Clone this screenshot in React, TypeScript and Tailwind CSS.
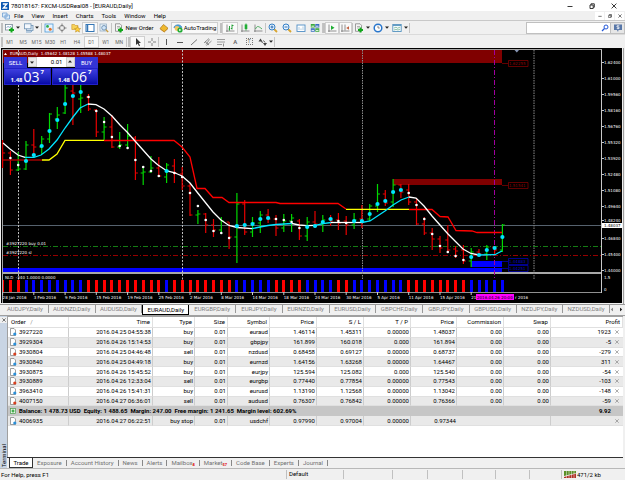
import { useState, type ReactNode } from "react";
import clsx from "clsx";

/* ---------- toolbar icons, drawn on a 10x10 grid ---------- */

function Ic({ children, className = "w-[10px] h-[10px]" }: { children: ReactNode; className?: string }) {
  return (
    <svg viewBox="0 0 10 10" className={clsx("shrink-0", className)} fill="none" aria-hidden="true">
      {children}
    </svg>
  );
}

const plus = <path d="M6.5 4.5v5M4 7h5" stroke="#12a81c" strokeWidth="2" />;
const axes = <path d="M2 1.5v7.5M1 8h8.5" stroke="#777" strokeWidth="0.8" />;

const icons = {
  newChart: (
    <Ic>
      <rect x="0.5" y="1.5" width="7" height="5.5" fill="#fff" stroke="#7a8b99" strokeWidth="0.8" />
      <path d="M1.5 4.5l1.5-1 1.5.8 2-1.5" stroke="#5a87b5" strokeWidth="0.7" />
      {plus}
    </Ic>
  ),
  profiles: (
    <Ic>
      <rect x="2.5" y="2.5" width="6.5" height="5" fill="#dce9f5" stroke="#6f93b5" strokeWidth="0.8" />
      <rect x="0.5" y="0.8" width="6.5" height="5" fill="#f3f8fd" stroke="#6f93b5" strokeWidth="0.8" />
      <path d="M2 9h5l1-.8" stroke="#7fa5cc" />
    </Ic>
  ),
  watch: (
    <Ic>
      <rect x="1" y="1" width="8" height="8" fill="#e8f3ff" stroke="#4f9bd8" strokeWidth="0.8" />
      <circle cx="3.5" cy="3.4" r="1.4" fill="#2fae4e" />
      <circle cx="6.2" cy="6.2" r="1.5" fill="#e0752a" />
    </Ic>
  ),
  target: (
    <Ic>
      <circle cx="5" cy="5" r="2.6" stroke="#777" strokeWidth="0.8" />
      <path d="M5 .5v3M5 6.5v3M.5 5h3M6.5 5h3" stroke="#666" strokeWidth="0.8" />
    </Ic>
  ),
  navigator: (
    <Ic>
      <path d="M.8 1.5h2.7l.8 1H7v4H.8z" fill="#f7d35a" stroke="#c9962a" strokeWidth="0.6" />
      <path d="M6.5 3.5l1 1.9 2.1.2L8 7l.5 2.1-2-1.1-2 1.1L5 7 3.5 5.6l2.1-.2z" fill="#ffcf3d" stroke="#b98717" strokeWidth="0.5" />
    </Ic>
  ),
  terminal: (
    <Ic>
      <rect x="1" y="1.5" width="8" height="7" fill="#fff" stroke="#3576b5" strokeWidth="1" />
      <path d="M2.5 2v6" stroke="#3576b5" strokeWidth="1.5" />
    </Ic>
  ),
  tester: (
    <Ic>
      <rect x="1" y="1" width="6.5" height="7" fill="#e9f1f8" stroke="#8aa5bf" strokeWidth="0.7" />
      <circle cx="5" cy="4.8" r="2.3" fill="#cfe5f8" stroke="#5f84a8" strokeWidth="0.8" />
      <path d="M6.8 6.6l2.4 2.4" stroke="#c79a3c" strokeWidth="1.3" />
    </Ic>
  ),
  order: (
    <Ic>
      <path d="M1.5.8H6l1.5 1.5v6h-6z" fill="#f5f5f5" stroke="#777" strokeWidth="0.7" />
      <path d="M3 3.5h3M3 5h2" stroke="#888" strokeWidth="0.6" />
      {plus}
    </Ic>
  ),
  editor: (
    <Ic>
      <path d="M1 5.5L4.5 1.5 9 5.2 5.2 8.8z" fill="#efb92d" stroke="#a8741a" strokeWidth="0.7" />
      <path d="M1.2 6l4 3 3.7-3.3" stroke="#c98b22" strokeWidth="0.8" />
    </Ic>
  ),
  auto: (
    <Ic>
      <path d="M.8 4.5C2 .8 8 .8 9 4.5z" fill="#4ba3dc" stroke="#2b75ad" strokeWidth="0.5" />
      <circle cx="4" cy="5.5" r="2.4" fill="#f3c761" />
      <circle cx="7" cy="7" r="2.6" fill="#22ab35" />
      <path d="M6.2 5.7L8.4 7 6.2 8.3z" fill="#fff" />
    </Ic>
  ),
  bars: (
    <Ic>
      {axes}
      <path d="M4.5 3v4.5M3.5 6h1M7 1.5v5M7 2.5h1.5M5.8 5.5H7" stroke="#149a2a" strokeWidth="0.9" />
    </Ic>
  ),
  candles: (
    <Ic>
      {axes}
      <path d="M6 .5v7" stroke="#149a2a" strokeWidth="0.8" />
      <rect x="4.7" y="1.5" width="2.6" height="4.5" fill="#1fae35" />
    </Ic>
  ),
  line: (
    <Ic>
      {axes}
      <path d="M2.5 6C4 2.5 5.5 3 9 6" stroke="#3fa653" strokeWidth="0.9" />
    </Ic>
  ),
  zoomIn: (
    <Ic>
      <path d="M6 6l3 3" stroke="#d8a531" strokeWidth="1.8" />
      <circle cx="4" cy="4" r="3" fill="#e5f2ff" stroke="#357fc5" strokeWidth="1" />
      <path d="M2.5 4h3M4 2.5v3" stroke="#1e63ad" strokeWidth="0.9" />
    </Ic>
  ),
  zoomOut: (
    <Ic>
      <path d="M6 6l3 3" stroke="#d8a531" strokeWidth="1.8" />
      <circle cx="4" cy="4" r="3" fill="#e5f2ff" stroke="#357fc5" strokeWidth="1" />
      <path d="M2.5 4h3" stroke="#1e63ad" strokeWidth="0.9" />
    </Ic>
  ),
  grid: (
    <Ic>
      <rect x="1" y="2" width="8" height="6.5" fill="#fff" stroke="#4f8ec5" strokeWidth="0.9" />
      <path d="M3 4v3M5 5.5v1.5M7 3.5v3.5" stroke="#8db4d6" strokeWidth="0.7" />
    </Ic>
  ),
  tiles: (
    <Ic>
      <path d="M.8 1h4v3.5h-4zM5.3 5.2h4v3.5h-4z" fill="#3aa83f" />
      <path d="M5.3 1h4v3.5h-4zM.8 5.2h4v3.5h-4z" fill="#3a6fc0" />
      <path d="M1.5 3.2H4M6 3.2h2.5M1.5 7.4H4M6 7.4h2.5" stroke="#fff" strokeWidth="0.9" />
    </Ic>
  ),
  scroll: (
    <Ic>
      {axes}
      <path d="M4 2.5l3.5 2.3L4 7z" fill="#1fae35" />
    </Ic>
  ),
  shift: (
    <Ic>
      {axes}
      <path d="M5 1.5v6" stroke="#777" strokeWidth="0.8" />
      <path d="M9 3.2L6.2 5 9 6.7z" fill="#c2603f" />
    </Ic>
  ),
  clock: (
    <Ic>
      <circle cx="5" cy="5" r="3.8" fill="#fff" stroke="#2876cc" strokeWidth="1.5" />
      <path d="M5 2.8V5h1.8" stroke="#555" strokeWidth="0.7" />
    </Ic>
  ),
  template: (
    <Ic>
      <rect x="0.8" y="1.5" width="8.4" height="7" fill="#f4fafd" stroke="#5492be" strokeWidth="0.9" />
      <path d="M1 2.5h8" stroke="#5492be" strokeWidth="0.9" />
      <path d="M2 5l2-.8 1.5 1L8 4.2M2 7l2-.6 2 .6 2-.8" stroke="#56a172" strokeWidth="0.6" />
    </Ic>
  ),
  cursor: (
    <Ic>
      <path d="M3 1v7l1.7-1.5L6 9.2l1-.5-1.2-2.6H8z" fill="#333" />
    </Ic>
  ),
  cross: (
    <Ic>
      <path d="M5 1v3M5 6v3M1 5h3M6 5h3" stroke="#666" strokeWidth="0.8" />
    </Ic>
  ),
  vline: (
    <Ic>
      <path d="M5.5 2v6" stroke="#555" strokeWidth="1" />
    </Ic>
  ),
  hline: (
    <Ic>
      <path d="M2 5.5h6" stroke="#555" strokeWidth="1" />
    </Ic>
  ),
  trend: (
    <Ic>
      <path d="M2 8l6-5.5" stroke="#555" strokeWidth="0.8" />
    </Ic>
  ),
  channel: (
    <Ic>
      <path d="M1 6l5-4.5M3.5 8.5l5-4.5M3 7.5l3.5-5M2 4.5l4 3.5" stroke="#666" strokeWidth="0.7" />
    </Ic>
  ),
  fibo: (
    <Ic>
      <path d="M1 2.5h8M1 5h8M1 7.5h5" stroke="#888" strokeWidth="0.8" />
      <path d="M7.5 6.5v3" stroke="#777" strokeWidth="0.8" />
    </Ic>
  ),
  arrows: (
    <Ic>
      <path d="M2.5 1.5l2 3h-4zM7 9L5 6h4z" fill="#444" />
      <path d="M3 4.5l2 1M5.5 3.5l1.5 2" stroke="#444" strokeWidth="0.9" />
    </Ic>
  ),
};

const Caret = () => (
  <svg viewBox="0 0 4 3" className="w-[4px] h-[3px] shrink-0" aria-hidden="true">
    <path d="M0 .5h4L2 2.7z" fill="#222" />
  </svg>
);

const Sep = () => <span className="w-px h-[10px] bg-[#c4c4c4] shrink-0" />;
const Grip = () => <span className="w-[2px] h-[10px] border-x border-[#c0c0c0] shrink-0" />;

function Tool({
  label,
  children,
  pressed,
  className,
}: {
  label: string;
  children: ReactNode;
  pressed?: boolean;
  className?: string;
}) {
  return (
    <button
      type="button"
      aria-label={label}
      title={label}
      className={clsx(
        "h-[12px] flex items-center justify-center whitespace-nowrap",
        pressed && "bg-[#f9f9f9] border border-[#cfcfcf]",
        className ?? "flex-1 min-w-0",
      )}
    >
      {children}
    </button>
  );
}

/* ---------- chart data ---------- */

const STEP = 7.81;
const barX = (i: number) => Math.round((2.6 + STEP * i) * 10) / 10;

// [colour, high, low, left tick, right tick, dot y, dot kind]
type Bar = ["r" | "g", number, number, number, number, number, "c" | "w" | ""];

const bars: Bar[] = [
  ["r", 140, 168, 0, 153, 0, ""],
  ["r", 151, 175, 153, 170, 158, "w"],
  ["g", 152, 171, 170, 169, 165, "w"],
  ["g", 141, 170, 169, 145, 161, "c"],
  ["r", 129, 157, 145, 147, 155, "c"],
  ["g", 136, 154, 147, 139, 146, "c"],
  ["g", 113, 143, 139, 114, 131, "c"],
  ["g", 107, 129, 119, 115, 120, "c"],
  ["g", 84, 114, 113, 88, 104, "c"],
  ["r", 84, 125, 91, 93, 96, "c"],
  ["g", 85, 113, 99, 98, 92, "c"],
  ["r", 94, 111, 97, 109, 97, "w"],
  ["r", 109, 137, 110, 132, 111, "w"],
  ["g", 117, 141, 132, 127, 122, "w"],
  ["r", 115, 148, 127, 147, 137, "w"],
  ["g", 132, 149, 147, 145, 146, "w"],
  ["g", 124, 148, 145, 136, 148, "w"],
  ["r", 136, 180, 138, 173, 160, "w"],
  ["g", 166, 185, 173, 172, 167, "w"],
  ["g", 156, 173, 172, 168, 171, "w"],
  ["r", 157, 177, 168, 176, 176, "w"],
  ["g", 163, 183, 177, 165, 171, "c"],
  ["r", 159, 183, 166, 173, 173, "w"],
  ["r", 167, 190, 174, 186, 177, "w"],
  ["r", 183, 216, 186, 215, 193, "w"],
  ["g", 210, 224, 215, 214, 206, "w"],
  ["r", 213, 233, 214, 225, 220, "w"],
  ["r", 219, 237, 225, 230, 231, "w"],
  ["g", 217, 233, 230, 221, 233, "w"],
  ["r", 222, 249, 222, 237, 238, "w"],
  ["g", 193, 263, 237, 204, 226, "c"],
  ["r", 200, 235, 204, 232, 225, "c"],
  ["g", 217, 237, 232, 223, 224, "c"],
  ["g", 211, 233, 223, 215, 219, "c"],
  ["r", 209, 223, 215, 219, 218, "c"],
  ["r", 215, 236, 219, 228, 219, "w"],
  ["g", 214, 232, 228, 221, 220, "w"],
  ["g", 214, 232, 221, 218, 222, "w"],
  ["r", 219, 240, 221, 236, 228, "w"],
  ["g", 217, 241, 236, 222, 227, "c"],
  ["r", 211, 228, 222, 224, 226, "c"],
  ["g", 215, 232, 224, 220, 222, "c"],
  ["r", 215, 226, 219, 221, 219, "c"],
  ["r", 213, 230, 220, 223, 221, "w"],
  ["r", 216, 235, 221, 225, 223, "w"],
  ["g", 213, 229, 225, 220, 221, "c"],
  ["r", 205, 228, 219, 221, 221, "c"],
  ["g", 204, 221, 219, 206, 214, "c"],
  ["g", 184, 212, 206, 194, 204, "c"],
  ["r", 190, 206, 194, 203, 201, "c"],
  ["g", 179, 207, 202, 185, 192, "c"],
  ["r", 184, 198, 185, 192, 190, "c"],
  ["r", 184, 205, 190, 202, 193, "w"],
  ["r", 198, 225, 202, 224, 205, "w"],
  ["r", 217, 235, 224, 233, 219, "w"],
  ["r", 228, 250, 233, 239, 234, "w"],
  ["r", 236, 253, 239, 248, 246, "w"],
  ["r", 225, 252, 240, 250, 252, "w"],
  ["r", 246, 258, 249, 251, 256, "w"],
  ["r", 245, 264, 250, 261, 260, "w"],
  ["g", 248, 267, 261, 252, 257, "c"],
  ["r", 249, 257, 252, 254, 255, "c"],
  ["g", 245, 260, 254, 247, 250, "c"],
  ["r", 246, 254, 247, 250, 248, "c"],
  ["g", 224, 252, 250, 225, 237, "c"],
];

// one letter for each bar of the lower indicator window
const histogram = "rrrbbbbbbbbrrrrrrrrrrbrrrrrrrrbbbbbrrrrbbbbrrbbbbbbbrrrrrrrrbbbbb";

const lines: { color: string; points: string }[] = [
  { color: "#a00000", points: "3,160 42,160" },
  { color: "#ffff00", points: "42,160 49,160 57,154 65,140.3 104,140.3" },
  { color: "#ff0000", points: "104,140.5 174,140.5 182,147 190,157 197,188.5 205,188.5 213,197.5 222,197.5 229,202.5 276,202.5 280,203.5 338,203.5 346,209" },
  { color: "#ffff00", points: "346,209.3 409,209.3" },
  { color: "#ff0000", points: "409,209.5 432,209.5 440,216.5 448,217 456,230.5 472,231 477,232.5 502,232.5" },
  { color: "#ffffff", points: "3,143 10,149 18,155 25,157.3" },
  { color: "#00e5ff", points: "25,157.3 34,157.3 41,155 49,149 57,140 65,128 73,117 80,108 88,104" },
  {
    color: "#ffffff",
    points:
      "88,104 96,104.7 104,109 112,116 120,125 127,132 135,141 143,150 151,159 158,165 167,171 174,172.5 182,176 190,183 197,192 205,202 213,212 221,220 229,225.5 237,227.5 252,228.7",
  },
  { color: "#00e5ff", points: "252,228.7 260,227 268,225.5 276,224.5 292,223.5" },
  { color: "#ffffff", points: "292,223.5 299,225 307,225.7 315,225.3" },
  { color: "#00e5ff", points: "315,225.3 323,223.7 331,222.5" },
  { color: "#ffffff", points: "331,222.5 362,222.5" },
  { color: "#00e5ff", points: "362,222.5 370,221 385,211 393,205 401,200 409,197" },
  { color: "#ffffff", points: "409,197 416,198 424,206 432,216 440,225 448,234 456,242 463,249 471,253.5 479,255" },
  { color: "#00e5ff", points: "479,255 495,254.7 498,253 502,251" },
];

const prices: [string, number][] = [
  ["1.62400", 62],
  ["1.61000", 78],
  ["1.59560", 94],
  ["1.58160", 110],
  ["1.56760", 126],
  ["1.55320", 142],
  ["1.53920", 158],
  ["1.52480", 174],
  ["1.51080", 190],
  ["1.49640", 206],
  ["1.48240", 220],
  ["1.46840", 238],
  ["1.45400", 254],
  ["1.44000", 270],
];

// every fourth bar is labelled; the last one is half hidden by the cursor date
const dates = [
  "28 Jan 2016", "3 Feb 2016", "9 Feb 2016", "15 Feb 2016", "19 Feb 2016", "25 Feb 2016",
  "2 Mar 2016", "8 Mar 2016", "14 Mar 2016", "18 Mar 2016", "24 Mar 2016", "30 Mar 2016",
  "5 Apr 2016", "11 Apr 2016", "15 Apr 2016", "21",
];

const levels: [string, number, string][] = [
  ["1.62255", 63, "#8c0000"],
  ["1.51541", 185, "#8c0000"],
  ["1.44883", 261, "#0000c8"],
  ["1.44251", 268, "#0000c8"],
];

function Chart() {
  return (
    <svg
      viewBox="0 48 625 256"
      className="block w-full [font-family:'DejaVu_Sans',Verdana,sans-serif] text-[4px]"
      role="img"
      aria-label="EURAUD daily chart"
    >
      <rect x="0" y="48" width="625" height="256" fill="#f0f0f0" />
      <rect x="1" y="48" width="621" height="255" fill="#000" />
      <rect x="623" y="48" width="1" height="256" fill="#a0a0a0" />
      <path d="M2.5 303V49.5H602" fill="none" stroke="#a8a8a8" />

      <g shapeRendering="crispEdges">
        <rect x="3" y="50" width="499" height="13" fill="#800000" />
        <rect x="393" y="179" width="109" height="6" fill="#800000" />
        <rect x="3" y="268" width="499" height="4" fill="#0000ff" />
        <rect x="471" y="261" width="31" height="6" fill="#0000ff" />
        <rect x="3" y="272" width="598" height="2" fill="#a8a8a8" />
        <rect x="3" y="292" width="599" height="1" fill="#909090" />
        <rect x="601" y="50" width="1" height="243" fill="#c8c8c8" />
        <rect x="3" y="225" width="598" height="1" fill="#56626e" />
      </g>

      <path d="M18.5 50V292M182.5 50V280" stroke="#c0c0c0" strokeDasharray="2 1.5" />
      <path d="M362.5 50V280M534 50V280" stroke="#8a8a8a" strokeDasharray="1.5 1" />
      <path d="M494.5 50V280" stroke="#a000a0" strokeDasharray="5 2 1 2" />
      <path d="M3 246.5H601" stroke="#168a16" strokeDasharray="5 2 1 2" strokeWidth="0.9" />
      <path d="M3 255.5H601" stroke="#a80000" strokeDasharray="5 2 1 2" strokeWidth="0.9" />
      <path d="M514.5 50h4.5l-2.2 2.5z" fill="#8796b5" />

      {bars.map(([c, hi, lo, l, r], i) => (
        <path
          key={i}
          d={`M${barX(i)} ${hi}V${lo}${l ? `M${barX(i) - 2.5} ${l}h2.5` : ""}M${barX(i)} ${r}h2.5`}
          stroke={c === "r" ? "#e60000" : "#00d800"}
          strokeWidth="1.2"
          fill="none"
        />
      ))}
      {lines.map((l, i) => (
        <polyline key={i} points={l.points} fill="none" stroke={l.color} strokeWidth="1.3" />
      ))}
      {bars.map(([, , , , , y, kind], i) =>
        kind ? <circle key={i} cx={barX(i)} cy={y} r={kind === "c" ? 2.1 : 1.3} fill={kind === "c" ? "#00e5ff" : "#fff"} /> : null,
      )}
      {histogram.split("").map((c, i) => (
        <rect
          key={i}
          x={Math.max(3, Math.round(barX(i) - 1.5))}
          y="280"
          width={i ? 3 : 1}
          height="12"
          fill={c === "r" ? "#ff0000" : "#0000ff"}
        />
      ))}

      <path d="M4 55h3l-1.5-2.2z" fill="#fff" />
      <text x="10" y="55" fill="#fff">EURAUD,Daily&#160; 1.45642 1.48128 1.45588 1.48037</text>
      <text x="6" y="245" fill="#fff">#3927220 buy 0.01</text>
      <text x="6" y="254" fill="#fff">#3927220 sl</text>
      <text x="5" y="279" fill="#fff">NLD&#160; -340 1.0000 0.0000</text>

      {prices.map(([p, y]) => (
        <g key={p}>
          <path d={`M602 ${y + 0.5}h2`} stroke="#c8c8c8" />
          <text x="604" y={y + 2} fill="#fff">{p}</text>
        </g>
      ))}
      <rect x="602" y="223" width="20" height="5" fill="#fff" />
      <text x="604" y="227" fill="#000">1.48037</text>
      <text x="604" y="279" fill="#fff">1.5</text>
      <text x="604" y="291" fill="#fff">0</text>

      {levels.map(([label, y, color]) => (
        <g key={label}>
          <path d={`M502 ${y + 0.5}h6M508.5 ${y - 2.5}h19.5v6h-19.5z`} stroke={color} strokeWidth="0.7" fill="none" />
          <text x="509" y={y + 2} fill={color}>{label}</text>
        </g>
      ))}

      {dates.map((d, i) => (
        <g key={d}>
          <path d={`M${barX(i * 4)} 292v3`} stroke="#c8c8c8" />
          <text x={barX(i * 4)} y="299" fill="#fff">{d}</text>
        </g>
      ))}
      <rect x="476" y="294" width="38" height="6" fill="#ff00ff" />
      <text x="477" y="299" fill="#000">2016.04.26 20:00</text>
      <text x="515" y="299" fill="#fff">r 2016</text>
    </svg>
  );
}

function Quote({ label, big }: { label: string; big: string }) {
  return (
    <button
      type="button"
      aria-label={label}
      className="flex-1 h-[17px] flex items-end justify-center gap-px text-white bg-linear-to-b from-[#3d3ddf] to-[#0808a8] border border-[#2222c8] [font-family:'Open_Sans',sans-serif]"
    >
      <span className="text-[6px] leading-[8px] font-bold">1.48</span>
      <span className="text-[14px] leading-[15px]">{big}</span>
      <span className="text-[6px] leading-[7px] font-bold self-start">7</span>
    </button>
  );
}

function OneClick() {
  const [lot, setLot] = useState("0.01");
  const side = "w-[23px] h-[11px] leading-[10px] text-white bg-[#3434d6]";
  return (
    <div className="absolute left-[4px] top-[9px] w-[94px] flex flex-col">
      <div className="flex items-start justify-between">
        <button type="button" className={side}>SELL</button>
        <div className="flex w-[47px] h-[10px] bg-white">
          <button type="button" aria-label="Decrease volume" className="w-[9px] bg-[#e8e8e8] border border-[#ccc] flex items-center justify-center">
            <Caret />
          </button>
          <input
            aria-label="Volume"
            value={lot}
            onChange={(e) => setLot(e.target.value)}
            className="flex-1 min-w-0 text-right pr-[3px] outline-none"
          />
          <button type="button" aria-label="Increase volume" className="w-[9px] bg-[#e8e8e8] border border-[#ccc] flex items-center justify-center rotate-180">
            <Caret />
          </button>
        </div>
        <button type="button" className={side}>BUY</button>
      </div>
      <div className="flex gap-px">
        <Quote label="Sell at 1.48037" big="03" />
        <Quote label="Buy at 1.48067" big="06" />
      </div>
    </div>
  );
}

/* ---------- terminal ---------- */

const orders = [
  ["3927220", "2016.04.25 04:55:38", "buy", "0.01", "euraud", "1.46114", "1.45311", "0.00000", "1.48037", "0.00", "0.00", "1923"],
  ["3929304", "2016.04.26 15:14:53", "buy", "0.01", "gbpjpy", "161.899", "160.018", "0.000", "161.894", "0.00", "0.00", "-5"],
  ["3930804", "2016.04.25 04:46:48", "sell", "0.01", "nzdusd", "0.68458", "0.69127", "0.00000", "0.68737", "0.00", "0.00", "-279"],
  ["3930840", "2016.04.25 04:49:18", "buy", "0.01", "eurnzd", "1.64156", "1.63268", "0.00000", "1.64467", "0.00", "0.00", "311"],
  ["3930875", "2016.04.26 15:45:52", "buy", "0.01", "eurjpy", "125.594", "125.082", "0.000", "125.540", "0.00", "0.00", "-54"],
  ["3930889", "2016.04.26 12:33:04", "sell", "0.01", "eurgbp", "0.77440", "0.77854", "0.00000", "0.77543", "0.00", "0.00", "-103"],
  ["3963410", "2016.04.26 15:41:31", "buy", "0.01", "eurusd", "1.13190", "1.12568", "0.00000", "1.13042", "0.00", "0.00", "-148"],
  ["4007150", "2016.04.27 06:36:01", "sell", "0.01", "audusd", "0.76307", "0.76842", "0.00000", "0.76366", "0.00", "0.00", "-59"],
];
const pending = ["4006935", "2016.04.27 06:22:51", "buy stop", "0.01", "usdchf", "0.97990", "0.97004", "0.00000", "0.97344", "", "", ""];

const headers = ["Time", "Type", "Size", "Symbol", "Price", "S / L", "T / P", "Price", "Commission", "Swap", "Profit"];

function OrderRow({ row, shaded }: { row: string[]; shaded: boolean }) {
  return (
    <tr className={clsx("h-[9px]", shaded ? "bg-[#e9e9e9]" : "bg-white")}>
      {row.map((cell, i) => (
        <td
          key={i}
          className={clsx(
            "p-0 whitespace-nowrap border-b border-[#e0e0e0]",
            i > 0 && "text-right",
            i < 11 && "pr-px",
            i < 11 && !(row[9] === "" && (i === 8 || i === 9)) && "border-r border-r-[#cdcdcd]",
          )}
        >
          {i === 0 ? (
            <span className="flex items-center gap-[2px] pl-px">
              <svg viewBox="0 0 8 8" className="w-[8px] h-[8px] shrink-0" aria-hidden="true">
                <path d="M1.5.5H5L6.5 2v5.5h-5z" fill="#fff" stroke="#777" strokeWidth="0.7" />
                <circle cx="5.8" cy="6" r="1.6" fill={row[2] === "sell" ? "#d8401f" : "#2a8fd8"} />
              </svg>
              {cell}
            </span>
          ) : i === 11 ? (
            <span className="flex items-center justify-end">
              {cell}
              <button type="button" aria-label={`Close order ${row[0]}`} className="w-[12px] flex items-center justify-center">
                <svg viewBox="0 0 4 4" className="w-[4px] h-[4px]" aria-hidden="true">
                  <path d="M.3.3l3.4 3.4M3.7.3L.3 3.7" stroke="#888" strokeWidth="0.7" />
                </svg>
              </button>
            </span>
          ) : (
            cell
          )}
        </td>
      ))}
    </tr>
  );
}

function Orders() {
  return (
    <table className="w-full h-[109px] table-fixed border-separate border-spacing-0">
      <colgroup>
        <col className="w-[61px]" />
        <col className="w-[84px]" />
        <col className="w-[42px]" />
        <col className="w-[33px]" />
        <col className="w-[42px]" />
        <col className="w-[47px]" />
        <col className="w-[47px]" />
        <col className="w-[47px]" />
        <col className="w-[46px]" />
        <col className="w-[47px]" />
        <col className="w-[47px]" />
        <col />
      </colgroup>
      <thead>
        <tr className="h-[11px]">
          <th scope="col" className="p-0 pl-[3px] text-left font-normal border-r border-b border-[#e0e0e0]">
            Order <span className="pl-[3px] text-[#888]">/</span>
          </th>
          {headers.map((h, i) => (
            <th key={i} scope="col" className="p-0 pr-[2px] text-right font-normal border-r border-b border-[#e0e0e0]">
              {h}
            </th>
          ))}
        </tr>
      </thead>
      <tbody>
        {orders.map((row, i) => (
          <OrderRow key={row[0]} row={row} shaded={i % 2 === 1} />
        ))}
        <tr className="h-[9px] bg-[#c6c6c6] font-bold">
          <td colSpan={11} className="p-0 whitespace-nowrap">
            <span className="flex items-center gap-[3px] pl-[2px]">
              <svg viewBox="0 0 6 6" className="w-[6px] h-[6px] shrink-0" aria-hidden="true">
                <rect x="0.5" y="0.5" width="5" height="5" fill="#e8f5e8" stroke="#4a9c4a" strokeWidth="0.7" />
                <path d="M3 1.5v3M1.5 3h3" stroke="#159a22" strokeWidth="1.1" />
              </svg>
              Balance: 1 478.73 USD&#160; Equity: 1 488.65&#160; Margin: 247.00&#160; Free margin: 1 241.65&#160; Margin level: 602.69%
            </span>
          </td>
          <td className="p-0 pr-[12px] text-right">9.92</td>
        </tr>
        <OrderRow row={pending} shaded />
      </tbody>
    </table>
  );
}

const terminalTabs: { name: string; count?: string }[] = [
  { name: "Exposure" },
  { name: "Account History" },
  { name: "News" },
  { name: "Alerts" },
  { name: "Mailbox", count: "8" },
  { name: "Market", count: "57" },
  { name: "Code Base" },
  { name: "Experts" },
  { name: "Journal" },
];

const chartTabs = [
  "AUDJPY", "AUDNZD", "AUDUSD", "EURAUD", "EURGBP", "EURJPY", "EURNZD",
  "EURUSD", "GBPCHF", "GBPJPY", "GBPUSD", "NZDJPY", "NZDUSD",
];

const menus = ["File", "View", "Insert", "Charts", "Tools", "Window", "Help"];
const frames = ["M1", "M5", "M15", "M30", "H1", "H4", "D1", "W1", "MN"];

function WindowGlyph({ kind, className }: { kind: "min" | "max" | "close"; className: string }) {
  return (
    <svg viewBox="0 0 6 6" className={className} fill="none" stroke="#222" strokeWidth="0.9" aria-hidden="true">
      {kind === "min" && <path d="M.5 3.5h5" />}
      {kind === "max" && <path d="M1 2h3.2v3.5H1zM2 2V.8h3.3v3.5h-1" />}
      {kind === "close" && <path d="M.6.6l4.8 4.8M5.4.6L.6 5.4" />}
    </svg>
  );
}

export default function App() {
  const [frame, setFrame] = useState("D1");
  const [search, setSearch] = useState("");

  return (
    <div className="min-h-screen flex flex-col overflow-hidden bg-[#f0f0f0] text-black text-[6px] leading-[8px] [font-family:Roboto,sans-serif]">
      <header className="h-[11px] bg-white flex items-center pl-px">
        <svg viewBox="0 0 8 8" className="w-[8px] h-[8px]" aria-hidden="true">
          <rect width="8" height="8" rx="0.5" fill="#0b57b0" />
          <path d="M1.8 2h4L2.3 6h4" fill="none" stroke="#fff" strokeWidth="1.3" />
        </svg>
        <h1 className="pl-[2px]">78018167: FXCM-USDReal08 - [EURAUD,Daily]</h1>
        <div className="ml-auto flex">
          {(["min", "max", "close"] as const).map((k) => (
            <button key={k} type="button" aria-label={k} className="w-[22px] flex justify-center">
              <WindowGlyph kind={k} className="w-[6px] h-[6px]" />
            </button>
          ))}
        </div>
      </header>

      <nav className="h-[10px] flex items-center gap-[8px] pl-[2px] border-b border-[#c8c8c8]">
        <svg viewBox="0 0 8 8" className="w-[8px] h-[8px] -mr-[4px]" aria-hidden="true">
          <path d="M.5 1H5v4H.5zM3 3h4.5v4H3z" fill="#dcecfa" stroke="#6ea0d2" strokeWidth="0.8" />
        </svg>
        {menus.map((m) => (
          <button key={m} type="button">{m}</button>
        ))}
        <div className="ml-auto flex">
          {(["min", "max", "close"] as const).map((k) => (
            <button key={k} type="button" aria-label={`Chart ${k}`} className="w-[9px] h-[8px] mr-px bg-white flex items-center justify-center">
              <WindowGlyph kind={k} className="w-[4px] h-[4px]" />
            </button>
          ))}
        </div>
      </nav>

      <div className="h-[13px] flex items-center">
        <div className="flex items-center pl-px">
          <Grip />
          <Tool label="New chart" className="w-[19px] gap-px">{icons.newChart}<Caret /></Tool>
          <Tool label="Profiles" className="w-[19px] gap-px">{icons.profiles}<Caret /></Tool>
          <Sep />
          <div className="w-[69px] flex">
            <Tool label="Market Watch">{icons.watch}</Tool>
            <Tool label="Data Window">{icons.target}</Tool>
            <Tool label="Navigator">{icons.navigator}</Tool>
            <Tool label="Terminal" pressed>{icons.terminal}</Tool>
            <Tool label="Strategy Tester">{icons.tester}</Tool>
          </div>
          <Sep />
          <Tool label="New Order" className="w-[44px] gap-px">{icons.order}<span>New Order</span></Tool>
          <Tool label="MetaEditor" className="w-[15px]">{icons.editor}</Tool>
          <Tool label="AutoTrading" pressed className="w-[47px] gap-px">{icons.auto}<span>AutoTrading</span></Tool>
        </div>
        <div className="flex items-center pl-[2px]">
          <Grip />
          <div className="w-[43px] flex">
            <Tool label="Bar Chart" pressed>{icons.bars}</Tool>
            <Tool label="Candlesticks">{icons.candles}</Tool>
            <Tool label="Line Chart">{icons.line}</Tool>
          </div>
          <Sep />
          <div className="w-[56px] flex">
            <Tool label="Zoom In">{icons.zoomIn}</Tool>
            <Tool label="Zoom Out">{icons.zoomOut}</Tool>
            <Tool label="Chart Grid">{icons.grid}</Tool>
            <Tool label="Tile Windows">{icons.tiles}</Tool>
          </div>
          <Sep />
          <Grip />
          <div className="w-[27px] flex">
            <Tool label="Auto Scroll" pressed>{icons.scroll}</Tool>
            <Tool label="Chart Shift" pressed>{icons.shift}</Tool>
          </div>
          <Sep />
          <div className="w-[56px] flex">
            <Tool label="Indicators" className="flex-1 gap-[2px]">{icons.order}<Caret /></Tool>
            <Tool label="Periods" className="flex-1 gap-[2px]">{icons.clock}<Caret /></Tool>
            <Tool label="Templates" className="flex-1 gap-[2px]">{icons.template}<Caret /></Tool>
          </div>
          <Sep />
        </div>
        <div className="ml-auto flex items-center h-[12px] w-[99px] border border-[#c0c0c0] bg-white">
          <input
            type="search"
            aria-label="Search"
            value={search}
            onChange={(e) => setSearch(e.target.value)}
            className="flex-1 min-w-0 h-full px-[2px] outline-none"
          />
          <svg viewBox="0 0 8 8" className="w-[8px] h-[8px] mr-px" fill="none" aria-hidden="true">
            <circle cx="5" cy="3" r="2" stroke="#2458d8" strokeWidth="1" />
            <path d="M3.5 4.5L1 7" stroke="#2458d8" strokeWidth="1.3" />
          </svg>
          <button type="button" aria-label="Messages" className="w-[14px] h-full flex items-center justify-center bg-[#e6e6e6] border-l border-[#c0c0c0]">
            <svg viewBox="0 0 8 8" className="w-[8px] h-[8px]" aria-hidden="true">
              <path d="M0 .5h8V6H4.5L4 8 3 6H0z" fill="#5877a8" />
              <path d="M5.3 1.8H3v1.3h2v1.5H2.8" fill="none" stroke="#fff" strokeWidth="0.8" />
            </svg>
          </button>
        </div>
      </div>

      <div className="h-[14px] flex items-center pl-px border-t border-[#dadada] text-[#666]">
        <Grip />
        <div className="w-[123px] flex text-[5px]">
          {frames.map((f) => (
            <button
              key={f}
              type="button"
              onClick={() => setFrame(f)}
              className={clsx("flex-1 min-w-0 h-[12px]", frame === f && "bg-[#f9f9f9] border border-[#cfcfcf]")}
            >
              {f}
            </button>
          ))}
        </div>
        <Sep />
        <span className="pl-px" />
        <Grip />
        <div className="w-[28px] flex">
          <Tool label="Cursor" pressed>{icons.cursor}</Tool>
          <Tool label="Crosshair">{icons.cross}</Tool>
        </div>
        <Sep />
        <div className="w-[97px] flex">
          <Tool label="Vertical Line">{icons.vline}</Tool>
          <Tool label="Horizontal Line">{icons.hline}</Tool>
          <Tool label="Trendline">{icons.trend}</Tool>
          <Tool label="Channel">{icons.channel}</Tool>
          <Tool label="Fibonacci">{icons.fibo}</Tool>
          <Tool label="Text"><span className="font-semibold">A</span></Tool>
          <Tool label="Text Label"><span className="w-[7px] h-[7px] text-[5px] leading-[5px] border border-dotted border-[#777]">T</span></Tool>
        </div>
        <Tool label="Arrows" className="w-[18px] gap-px">{icons.arrows}<Caret /></Tool>
        <Sep />
      </div>

      <main className="relative">
        <Chart />
        <OneClick />
      </main>

      <div role="tablist" aria-label="Charts" className="h-[11px] flex items-start border-t border-[#999] pl-[2px] text-[#808080]">
        {chartTabs.map((t) => {
          const active = t === "EURAUD";
          return (
            <button
              key={t}
              type="button"
              role="tab"
              aria-selected={active}
              className={clsx(
                "flex-1 min-w-0 max-w-[47px] text-center whitespace-nowrap",
                active ? "h-[10px] bg-white text-black border-x border-b border-black" : "h-[8px] border-r border-[#999]",
              )}
            >
              {t},Daily
            </button>
          );
        })}
        <span className="ml-auto mr-[2px] w-[13px] h-[8px] flex items-center justify-between">
          <button type="button" aria-label="Scroll tabs left" className="rotate-90 opacity-50"><Caret /></button>
          <button type="button" aria-label="Scroll tabs right" className="-rotate-90"><Caret /></button>
        </span>
      </div>

      <section className="flex-1 flex border-t border-[#a0a0a0] pr-[2px]">
        <aside className="w-[7px] flex flex-col items-center justify-between py-px bg-[#c9d5e4]">
          <button type="button" aria-label="Close terminal" className="w-full h-[6px] flex items-center justify-center bg-[#f0f0f0]">
            <WindowGlyph kind="close" className="w-[4px] h-[4px]" />
          </button>
          <span className="[writing-mode:vertical-rl] rotate-180">Terminal</span>
        </aside>
        <div className="flex-1 min-w-0 flex flex-col justify-between">
          <div className="flex-1 bg-white border-t border-l border-[#a0a0a0]">
            <Orders />
          </div>
          <div role="tablist" aria-label="Terminal" className="h-[11px] flex items-start border-t border-[#333] pl-[2px] text-[#707070]">
            <button type="button" role="tab" aria-selected="true" className="w-[24px] h-[10px] bg-white text-black border-x border-b border-[#333]">
              Trade
            </button>
            {terminalTabs.map((t) => (
              <button key={t.name} type="button" role="tab" aria-selected="false" className="h-[9px] flex items-center whitespace-nowrap">
                <span className="px-[4px]">
                  {t.name}
                  {t.count && <sub className="text-[4px] leading-none text-[#e00000] font-bold">{t.count}</sub>}
                </span>
                <span className="w-px h-[6px] bg-[#888]" />
              </button>
            ))}
          </div>
        </div>
      </section>

      <footer className="h-[12px] flex items-center border-t border-[#b8b8b8] pl-px">
        <span className="flex-1">For Help, press F1</span>
        <span className="w-[57px] h-[9px] border-l border-[#c0c0c0] pl-[2px]">Default</span>
        <span className="w-[49px] h-[9px] border-l border-[#c0c0c0]" />
        <span className="w-[35px] h-[9px] border-l border-[#c0c0c0]" />
        <span className="w-[35px] h-[9px] border-l border-[#c0c0c0]" />
        <span className="w-[33px] h-[9px] border-l border-[#c0c0c0]" />
        <span className="w-[34px] h-[9px] border-l border-[#c0c0c0]" />
        <span className="w-[32px] h-[9px] border-l border-[#c0c0c0]" />
        <span className="w-[64px] h-[9px] border-l border-[#c0c0c0] pl-[2px] flex items-center gap-px">
          <svg viewBox="0 0 12 7" className="w-[12px] h-[7px]" aria-hidden="true">
            <path d="M0 0h12v2L0 5z" fill="#5b8f28" />
            <path d="M0 7V6l12-3.5V7z" fill="#b03028" />
            <path d="M2.5 0v7M5 0v7M7.5 0v7M10 0v7" stroke="#f0f0f0" strokeWidth="0.5" />
          </svg>
          471/2 kb
        </span>
      </footer>
    </div>
  );
}
